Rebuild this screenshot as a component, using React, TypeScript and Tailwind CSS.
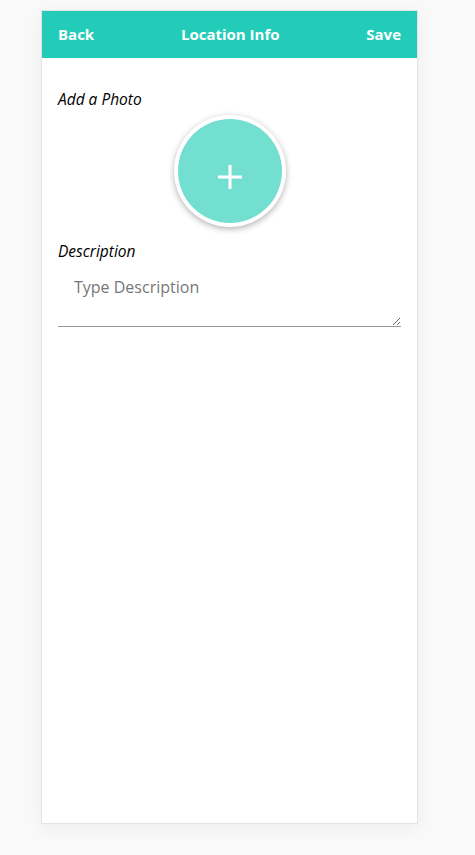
export default function App() {
  return (
    <div className="min-h-[855px] bg-[#f9f9f9] pt-[10px] font-['Open_Sans',sans-serif]">
      <div className="ml-[41px] flex h-[814px] w-[377px] flex-col border border-[#e3e3e3] bg-white shadow-[0_4px_16px_rgba(0,0,0,0.05)]">
        <header className="flex h-[47px] items-center justify-between bg-[#22ccb8] px-4 text-[15px] font-bold text-white">
          <button>Back</button>
          <h1>Location Info</h1>
          <button>Save</button>
        </header>
        <div className="flex flex-col px-4 pt-[31px]">
          <label className="text-[15.5px] italic leading-5 text-black">Add a Photo</label>
          <div className="mt-[6px] flex justify-center">
            <button className="flex h-[112px] w-[112px] items-center justify-center rounded-full bg-white shadow-[0_2px_6px_rgba(0,0,0,0.3)]">
              <span className="flex h-[104px] w-[104px] items-center justify-center rounded-full bg-[#72dfd1]">
                <svg width="24" height="24" viewBox="0 0 24 24" className="mt-[12px]">
                  <path d="M12 0v24M0 12h24" stroke="#fff" strokeWidth="3" />
                </svg>
              </span>
            </button>
          </div>
          <label className="mt-[14px] text-[15.5px] italic leading-5 text-black">Description</label>
          <textarea
            placeholder="Type Description"
            className="mt-[14px] h-[52px] w-full border-b border-[#999] px-4 pt-0 text-[16px] placeholder:text-[#777] outline-none"
          />
        </div>
      </div>
    </div>
  );
}
